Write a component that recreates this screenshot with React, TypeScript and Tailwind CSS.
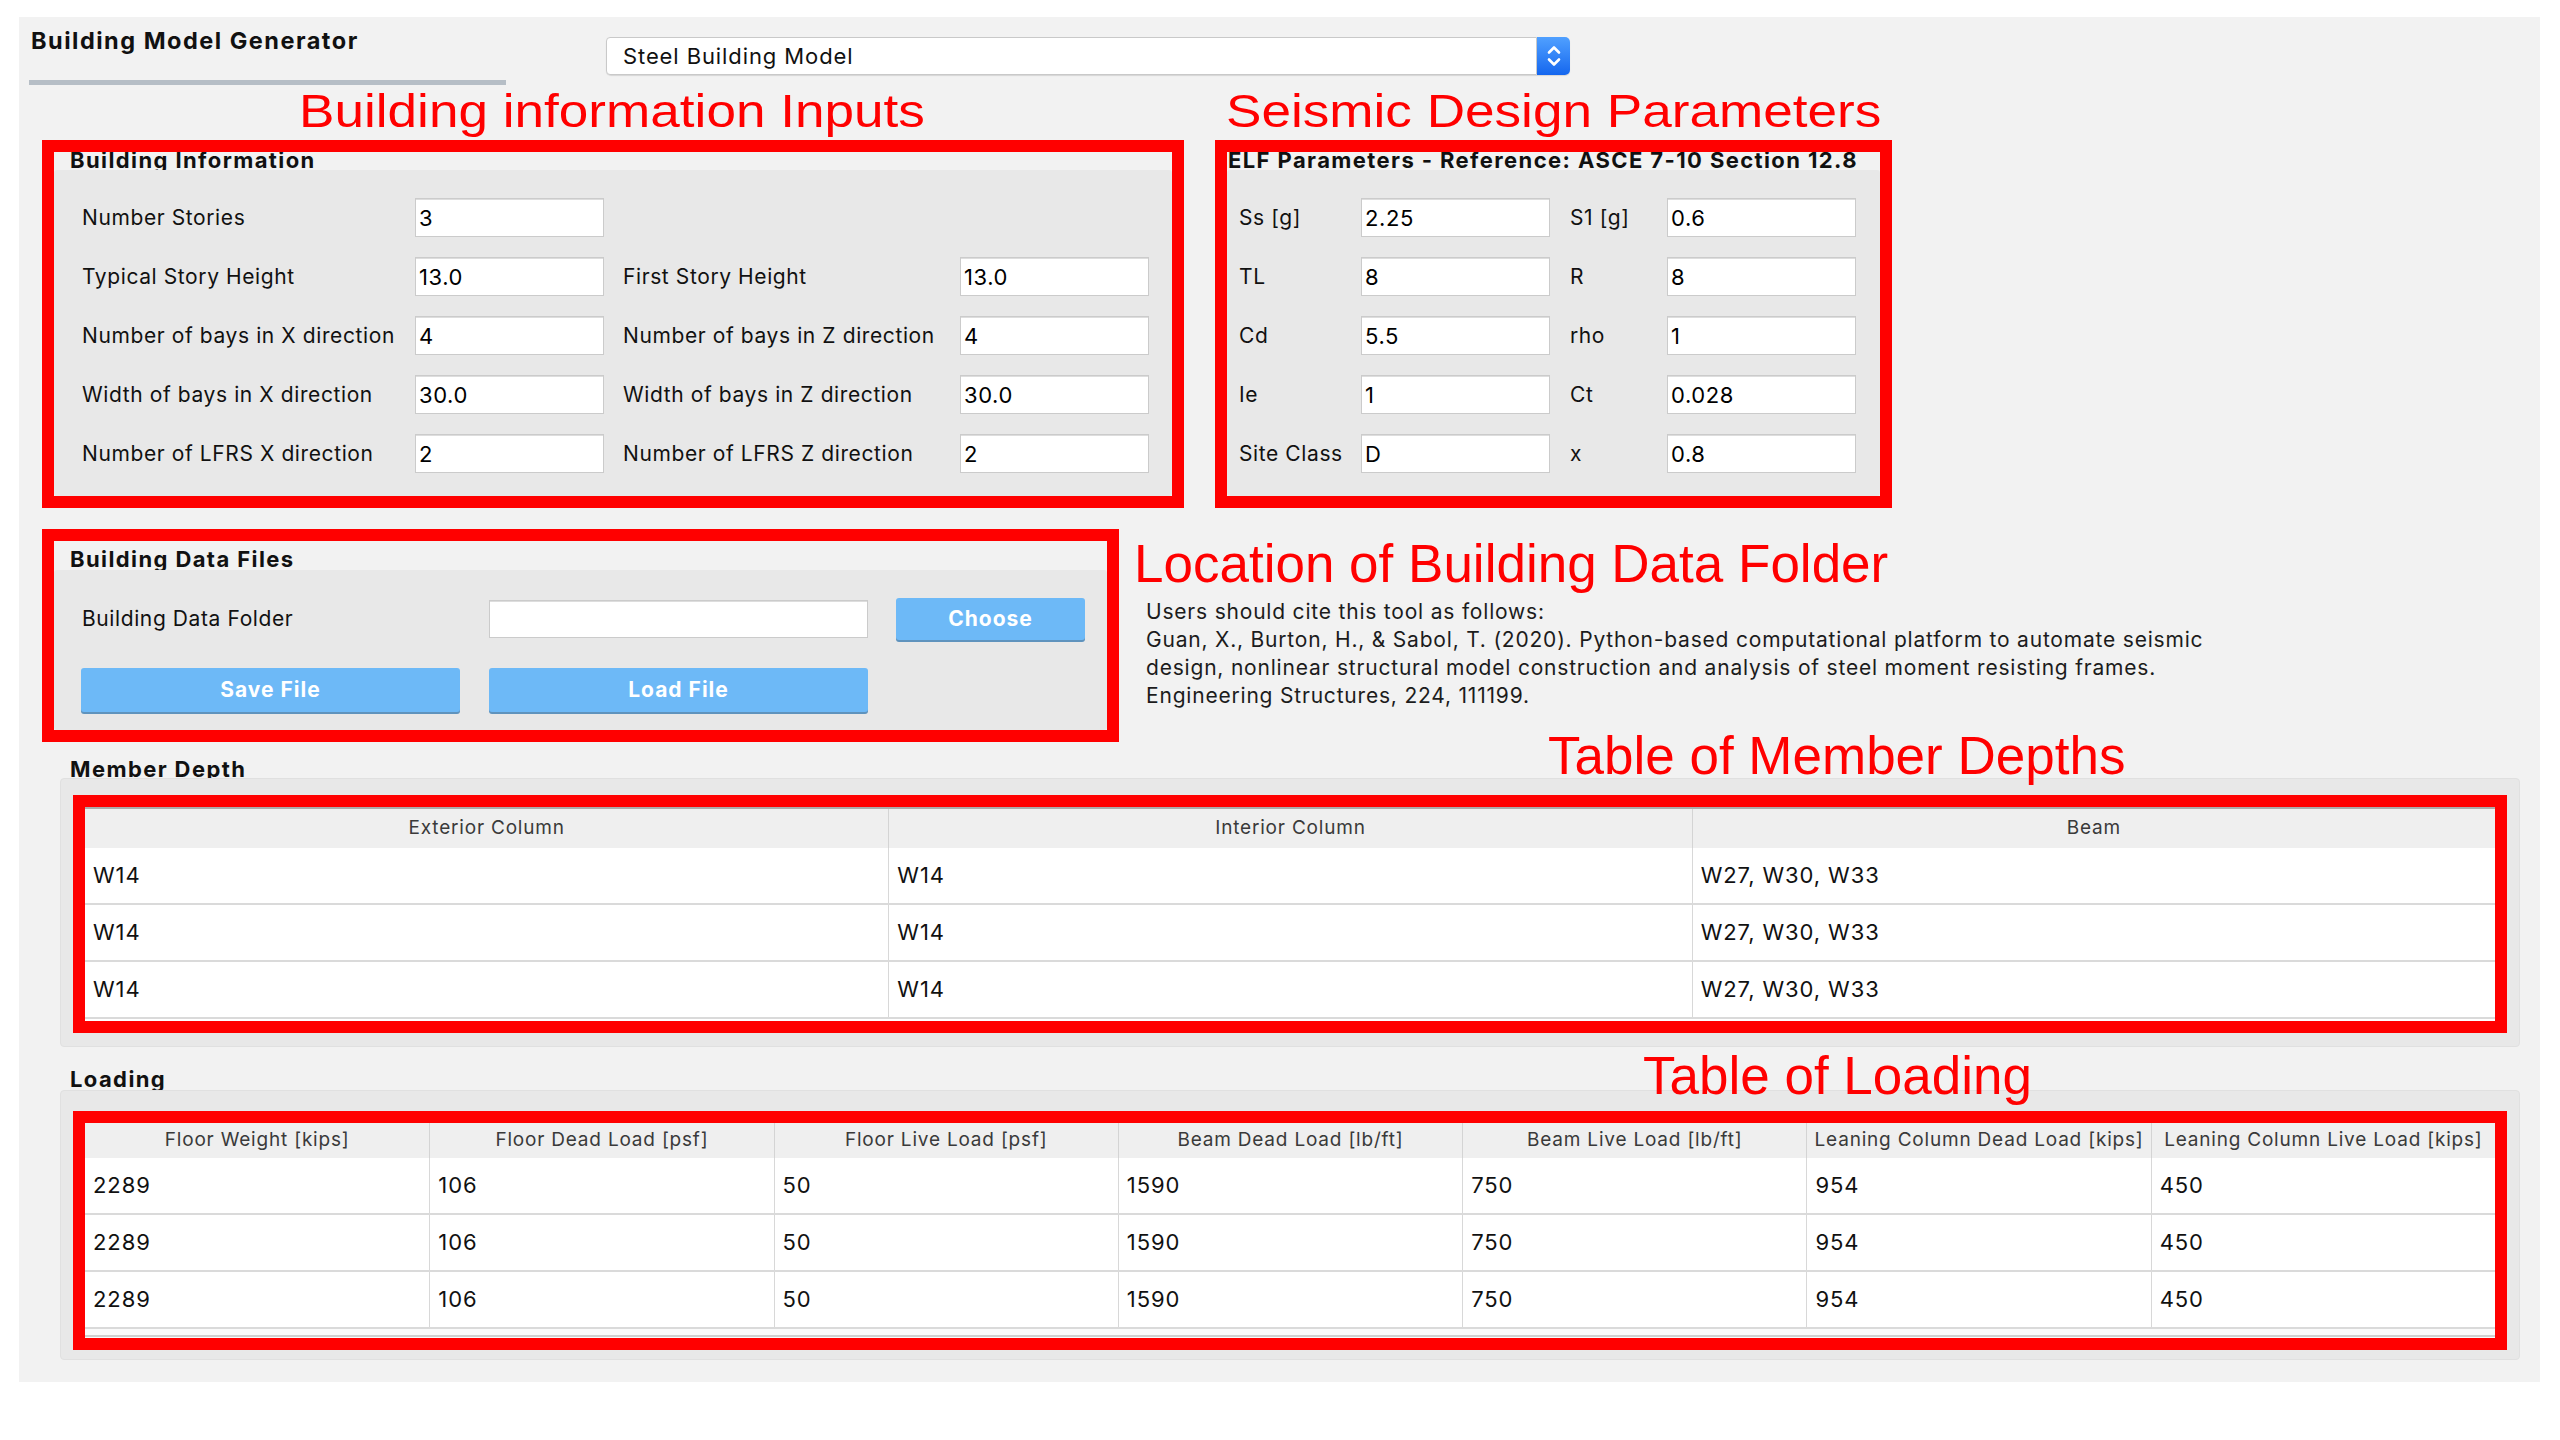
import React from "react";

type Row = [string, string, string | null, string | null];

const buildingRows: Row[] = [
  ["Number Stories", "3", null, null],
  ["Typical Story Height", "13.0", "First Story Height", "13.0"],
  ["Number of bays in X direction", "4", "Number of bays in Z direction", "4"],
  ["Width of bays in X direction", "30.0", "Width of bays in Z direction", "30.0"],
  ["Number of LFRS X direction", "2", "Number of LFRS Z direction", "2"],
];

const elfRows: Row[] = [
  ["Ss [g]", "2.25", "S1 [g]", "0.6"],
  ["TL", "8", "R", "8"],
  ["Cd", "5.5", "rho", "1"],
  ["Ie", "1", "Ct", "0.028"],
  ["Site Class", "D", "x", "0.8"],
];

const memberCols = ["Exterior Column", "Interior Column", "Beam"];
const memberRows = [
  ["W14", "W14", "W27, W30, W33"],
  ["W14", "W14", "W27, W30, W33"],
  ["W14", "W14", "W27, W30, W33"],
];

const loadCols = [
  "Floor Weight [kips]",
  "Floor Dead Load [psf]",
  "Floor Live Load [psf]",
  "Beam Dead Load [lb/ft]",
  "Beam Live Load [lb/ft]",
  "Leaning Column Dead Load [kips]",
  "Leaning Column Live Load [kips]",
];
const loadRows = [
  ["2289", "106", "50", "1590", "750", "954", "450"],
  ["2289", "106", "50", "1590", "750", "954", "450"],
  ["2289", "106", "50", "1590", "750", "954", "450"],
];

const Field = ({ value }: { value: string }) => (
  <input
    readOnly
    value={value}
    className="h-[39px] w-[189px] bg-white border border-[#cbcbcb] shadow-[inset_0_1px_0_#dddddd] px-[3px] text-[22px] tracking-[0.6px] text-black outline-none"
  />
);

const Btn = ({ label, wide }: { label: string; wide?: boolean }) => (
  <button
    className={`${wide ? "w-[379px] h-[44px]" : "w-[189px] h-[42px]"} rounded-[3px] bg-[#6db9f7] text-white font-bold text-[21px] tracking-[1px] shadow-[0_2px_0_#5f93bd]`}
  >
    {label}
  </button>
);

const Red = "font-['Liberation_Sans',Arial,sans-serif] text-[#ff0000]";
const GroupTitle = "text-[22px] font-bold tracking-[1.4px] whitespace-nowrap";

export default function App() {
  return (
    <div className="w-[2560px] h-[1440px] bg-white pt-[17px] pl-[19px] font-['Inter',sans-serif] text-[#111]">
      <div className="w-[2521px] h-[1365px] bg-[#f2f2f2] flex flex-col">
        {/* title + model select */}
        <div className="flex h-[68px] shrink-0">
          <div className="ml-[10px] w-[477px] flex flex-col">
            <div className="h-[63px] pl-[2px] pt-[10px] leading-[28px] text-[23.5px] font-bold tracking-[1.5px] whitespace-nowrap">
              Building Model Generator
            </div>
            <div className="h-[5px] bg-[#b6bec6]" />
          </div>
          <div className="ml-[100px] mt-[20px] flex h-[38px] w-[964px] shadow-[0_1px_1px_rgba(0,0,0,0.12)] rounded-[5px]">
            <div className="flex-1 flex items-center pl-[16px] bg-white border border-[#c9c9c9] rounded-l-[4px] text-[22px] tracking-[0.9px]">
              Steel Building Model
            </div>
            <div className="w-[33px] rounded-r-[5px] bg-linear-to-b from-[#50a0ff] to-[#1466ee] flex items-center justify-center">
              <svg width="20" height="28" viewBox="0 0 20 28" fill="none" stroke="white" strokeWidth="2.6" strokeLinecap="round" strokeLinejoin="round">
                <path d="M5 10.5 L10 5.5 L15 10.5" />
                <path d="M5 17.5 L10 22.5 L15 17.5" />
              </svg>
            </div>
          </div>
        </div>

        {/* annotations over the two input groups */}
        <div className={`h-[55px] shrink-0 flex pt-[2px] text-[47px] leading-none ${Red}`}>
          <div className="ml-[280px] w-[927px]">
            <span className="inline-block origin-left scale-x-[1.13]">Building information Inputs</span>
          </div>
          <div>
            <span className="inline-block origin-left scale-x-[1.13]">Seismic Design Parameters</span>
          </div>
        </div>

        {/* input groups */}
        <div className="flex h-[368px] shrink-0 pl-[23px] gap-[31px]">
          <div className="w-[1142px] border-[12px] border-[#ff0000] flex flex-col overflow-hidden">
            <div className={`h-[18px] pl-[16px] leading-[17px] ${GroupTitle}`}>Building Information</div>
            <div className="flex-1 bg-[#e8e8e8] rounded-[3px] pt-[28px] pl-[28px] flex flex-col gap-[20px]">
              {buildingRows.map(([l1, v1, l2, v2]) => (
                <div key={l1} className="flex items-center h-[39px] text-[21px] tracking-[0.6px]">
                  <div className="w-[333px] whitespace-nowrap">{l1}</div>
                  <Field value={v1} />
                  {l2 && <div className="w-[356px] pl-[19px] whitespace-nowrap">{l2}</div>}
                  {v2 && <Field value={v2} />}
                </div>
              ))}
            </div>
          </div>

          <div className="w-[677px] border-[12px] border-[#ff0000] flex flex-col overflow-hidden">
            <div className={`h-[18px] pl-[1px] leading-[17px] ${GroupTitle}`}>
              ELF Parameters - Reference: ASCE 7-10 Section 12.8
            </div>
            <div className="flex-1 bg-[#e8e8e8] rounded-[3px] pt-[28px] pl-[12px] flex flex-col gap-[20px]">
              {elfRows.map(([l1, v1, l2, v2]) => (
                <div key={l1} className="flex items-center h-[39px] text-[21px] tracking-[0.6px]">
                  <div className="w-[122px] whitespace-nowrap">{l1}</div>
                  <Field value={v1} />
                  <div className="w-[117px] pl-[20px]">{l2}</div>
                  <Field value={v2 ?? ""} />
                </div>
              ))}
            </div>
          </div>
        </div>

        {/* data files + citation */}
        <div className="flex mt-[21px] h-[213px] shrink-0 pl-[23px]">
          <div className="w-[1077px] border-[12px] border-[#ff0000] flex flex-col overflow-hidden">
            <div className={`h-[29px] pl-[16px] pt-[8px] leading-[20px] ${GroupTitle}`}>Building Data Files</div>
            <div className="flex-1 bg-[#e8e8e8] rounded-[3px] pt-[28px] pl-[27px] flex flex-col gap-[28px]">
              <div className="flex items-center h-[42px]">
                <div className="w-[408px] pl-[1px] text-[21px] tracking-[0.6px]">Building Data Folder</div>
                <input readOnly value="" className="w-[379px] h-[38px] bg-white border border-[#cbcbcb] shadow-[inset_0_1px_0_#dddddd] outline-none" />
                <div className="ml-[28px]">
                  <Btn label="Choose" />
                </div>
              </div>
              <div className="flex gap-[29px]">
                <Btn label="Save File" wide />
                <Btn label="Load File" wide />
              </div>
            </div>
          </div>
          <div className="ml-[15px] pt-[8px]">
            <div className={`text-[53px] leading-none whitespace-nowrap ${Red}`}>Location of Building Data Folder</div>
            <div className="mt-[8px] pl-[12px] text-[21px] tracking-[0.8px] leading-[28px] text-[#1c1c1c] whitespace-nowrap">
              Users should cite this tool as follows:
              <br />
              Guan, X., Burton, H., &amp; Sabol, T. (2020). Python-based computational platform to automate seismic
              <br />
              design, nonlinear structural model construction and analysis of steel moment resisting frames.
              <br />
              Engineering Structures, 224, 111199.
            </div>
          </div>
        </div>

        {/* member depth */}
        <div className="flex h-[36px] shrink-0">
          <div className={`w-[1529px] pl-[51px] pt-[17px] leading-[20px] ${GroupTitle}`}>Member Depth</div>
          <div className={`relative z-10 -mt-[13px] text-[53px] leading-none whitespace-nowrap ${Red}`}>Table of Member Depths</div>
        </div>
        <div className="ml-[41px] w-[2460px] h-[269px] shrink-0 bg-[#e8e8e8] rounded-[4px] border border-[#e0e0e0] pt-[16px] px-[12px]">
          <div className="h-[238px] border-[12px] border-[#ff0000] overflow-hidden bg-white">
            <div className="grid grid-cols-3 h-[41px] bg-[#efefef] border-t-2 border-[#acacac]">
              {memberCols.map((c, i) => (
                <div
                  key={c}
                  className={`flex items-center justify-center text-[19px] tracking-[0.8px] text-[#3a3a3a] ${i > 0 ? "border-l border-[#d4d4d4]" : ""}`}
                >
                  {c}
                </div>
              ))}
            </div>
            {memberRows.map((r, ri) => (
              <div key={ri} className="grid grid-cols-3 h-[57px] border-b-2 border-[#dadada]">
                {r.map((v, i) => (
                  <div key={i} className={`flex items-center pl-[8px] text-[22px] tracking-[0.9px] ${i > 0 ? "border-l border-[#d8d8d8]" : ""}`}>
                    {v}
                  </div>
                ))}
              </div>
            ))}
          </div>
        </div>

        {/* loading */}
        <div className="flex h-[43px] shrink-0">
          <div className={`w-[1624px] pl-[51px] pt-[22px] leading-[20px] ${GroupTitle}`}>Loading</div>
          <div className={`relative z-10 pt-[2px] text-[53px] leading-none whitespace-nowrap ${Red}`}>Table of Loading</div>
        </div>
        <div className="ml-[41px] w-[2460px] h-[270px] shrink-0 bg-[#e8e8e8] rounded-[4px] border border-[#e0e0e0] pt-[20px] px-[12px]">
          <div className="h-[239px] border-[12px] border-[#ff0000] overflow-hidden bg-white">
            <div className="grid grid-cols-7 h-[35px] bg-[#efefef]">
              {loadCols.map((c, i) => (
                <div
                  key={c}
                  className={`flex items-center justify-center whitespace-nowrap text-[19px] tracking-[0.8px] text-[#3a3a3a] ${i > 0 ? "border-l border-[#d4d4d4]" : ""}`}
                >
                  {c}
                </div>
              ))}
            </div>
            {loadRows.map((r, ri) => (
              <div key={ri} className="grid grid-cols-7 h-[57px] border-b-2 border-[#dadada]">
                {r.map((v, i) => (
                  <div key={i} className={`flex items-center pl-[8px] text-[22px] tracking-[0.9px] ${i > 0 ? "border-l border-[#d8d8d8]" : ""}`}>
                    {v}
                  </div>
                ))}
              </div>
            ))}
            <div className="h-[9px] bg-[#fafafa] flex flex-col justify-end">
              <div className="h-[3px] border-t-2 border-[#d0d0d0]" />
            </div>
          </div>
        </div>
      </div>
    </div>
  );
}
